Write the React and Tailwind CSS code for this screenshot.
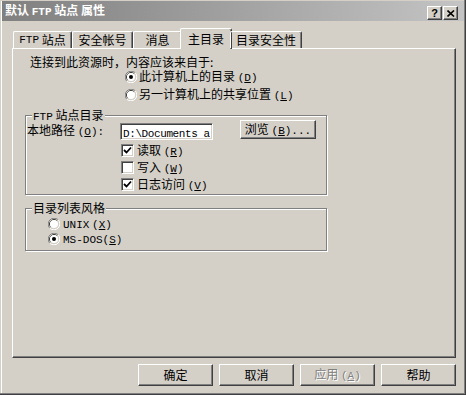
import React from 'react';

function L({ children }) {
  return <span className="font-['Liberation_Mono',monospace] text-[11px]">{children}</span>;
}

function Key({ k }) {
  return (
    <L>
      (<u>{k}</u>)
    </L>
  );
}

function Radio({ checked }) {
  return (
    <svg width="12" height="12" viewBox="0 0 12 12" className="shrink-0">
      <path d="M1.76 10.24 A6 6 0 0 1 10.24 1.76" stroke="#808080" strokeWidth="1" fill="none" />
      <path d="M10.24 1.76 A6 6 0 0 1 1.76 10.24" stroke="#ffffff" strokeWidth="1" fill="none" />
      <path d="M2.82 9.18 A4.5 4.5 0 0 1 9.18 2.82" stroke="#404040" strokeWidth="1" fill="none" />
      <path d="M9.18 2.82 A4.5 4.5 0 0 1 2.82 9.18" stroke="#d4d0c8" strokeWidth="1" fill="none" />
      <circle cx="6" cy="6" r="4" fill="#ffffff" />
      {checked && <circle cx="6" cy="6" r="2" fill="#000000" />}
    </svg>
  );
}

function Check({ checked }) {
  return (
    <div className="w-[13px] h-[13px] shrink-0 bg-white border border-t-[#808080] border-l-[#808080] border-r-white border-b-white shadow-[inset_1px_1px_0_#404040,inset_-1px_-1px_0_#d4d0c8] flex items-center justify-center">
      {checked && (
        <svg width="9" height="9" viewBox="0 0 9 9">
          <path d="M1 4 L3.5 6.5 L8 1.5" stroke="#000" strokeWidth="1.8" fill="none" />
        </svg>
      )}
    </div>
  );
}

function Tab({ children, width, active }) {
  if (active) {
    return (
      <div
        className={`${width} h-[21px] -mx-[2px] -mb-[1px] bg-[#d4d0c8] flex items-center justify-center rounded-t-[2px] border-t border-l border-white border-r border-r-[#404040] shadow-[inset_-1px_0_0_#808080]`}
      >
        {children}
      </div>
    );
  }
  return (
    <div
      className={`${width} h-[17px] flex items-center justify-center rounded-t-[2px] border-t border-l border-white border-r border-r-[#404040] shadow-[inset_-1px_0_0_#808080]`}
    >
      {children}
    </div>
  );
}

function Button({ children, disabled, className = '' }) {
  return (
    <div
      className={`flex items-center justify-center whitespace-nowrap border border-t-white border-l-white border-r-[#404040] border-b-[#404040] shadow-[inset_-1px_-1px_0_#808080] ${
        disabled ? 'text-[#808080] [text-shadow:1px_1px_0_#ffffff]' : ''
      } ${className}`}
    >
      {children}
    </div>
  );
}

export default function App() {
  return (
    <div className="w-[466px] h-[395px] bg-[#d4d0c8] flex flex-col text-[12px] leading-[14px] text-black font-['Noto_Sans_CJK_SC',sans-serif] shadow-[inset_-1px_-1px_0_#404040,inset_-2px_-2px_0_#808080,inset_1px_1px_0_#d4d0c8,inset_2px_2px_0_#ffffff]">
      {/* title bar */}
      <div className="mx-[2px] mt-[1px] h-[20px] flex items-center bg-linear-to-r from-[#808080] to-[#c4c4c4] pl-[3px] pr-[6px]">
        <span className="flex-1 font-bold text-white">
          默认 <L>FTP</L> 站点 属性
        </span>
        <div className="flex gap-[1px] self-end mb-[1px]">
          <Button className="w-[15px] h-[14px] bg-[#d4d0c8]">
            <span className="font-bold font-['Liberation_Sans',sans-serif] text-[11px] leading-[11px]">?</span>
          </Button>
          <Button className="w-[15px] h-[14px] bg-[#d4d0c8]">
            <svg width="8" height="7" viewBox="0 0 8 7">
              <path d="M0.5 0.5 L7 6.5 M7 0.5 L0.5 6.5" stroke="#000" strokeWidth="1.6" />
            </svg>
          </Button>
        </div>
      </div>

      {/* tabs */}
      <div className="relative z-10 mt-[7px] ml-[13px] h-[20px] flex items-end">
        <Tab width="w-[59px]">
          <L>FTP</L>&nbsp;站点
        </Tab>
        <Tab width="w-[61px]">安全帐号</Tab>
        <Tab width="w-[49px]">消息</Tab>
        <Tab width="w-[52px]" active>
          主目录
        </Tab>
        <Tab width="w-[72px]">目录安全性</Tab>
      </div>

      {/* panel */}
      <div className="ml-[12px] w-[444px] h-[310px] flex flex-col border border-t-white border-l-white border-r-[#404040] border-b-[#404040] shadow-[inset_-1px_-1px_0_#808080]">
        <div className="mt-[6px] ml-[17px] h-[14px]">连接到此资源时，内容应该来自于:</div>
        <div className="mt-[1px] ml-[112px] h-[14px] flex items-center gap-[2px]">
          <Radio checked />
          <span>
            此计算机上的目录 <Key k="D" />
          </span>
        </div>
        <div className="mt-[4px] ml-[112px] h-[14px] flex items-center gap-[2px]">
          <Radio />
          <span>
            另一计算机上的共享位置 <Key k="L" />
          </span>
        </div>

        {/* FTP site directory group */}
        <div className="relative mt-[13px] ml-[12px] w-[302px] h-[80px] pt-[5px] pl-[1px] border border-[#808080] shadow-[1px_1px_0_#ffffff,inset_1px_1px_0_#ffffff]">
          <span className="absolute left-[6px] -top-[7px] px-[1px] leading-[12px] bg-[#d4d0c8]">
            <L>FTP</L> 站点目录
          </span>
          <div className="h-[18px] flex items-start">
            <span className="w-[93px] mt-[2px]">
              本地路径 <Key k="O" />
              <L>:</L>
            </span>
            <div className="w-[93px] h-[17px] mt-[2px] bg-white overflow-hidden whitespace-nowrap border border-t-[#808080] border-l-[#808080] border-r-white border-b-white shadow-[inset_1px_1px_0_#404040,inset_-1px_-1px_0_#d4d0c8] pl-[2px] leading-[15px] tracking-[-0.4px]">
              <L>D:\Documents a</L>
            </div>
            <Button className="ml-[27px] w-[76px] h-[19px] -mt-[1px]">
              <span>
                浏览 <Key k="B" />
                <L>...</L>
              </span>
            </Button>
          </div>
          <div className="mt-[3px] pl-[94px] flex flex-col">
            <div className="h-[17px] flex items-center gap-[3px]">
              <Check checked />
              <span>
                读取 <Key k="R" />
              </span>
            </div>
            <div className="h-[17px] flex items-center gap-[3px]">
              <Check />
              <span>
                写入 <Key k="W" />
              </span>
            </div>
            <div className="h-[17px] flex items-center gap-[3px]">
              <Check checked />
              <span>
                日志访问 <Key k="V" />
              </span>
            </div>
          </div>
        </div>

        {/* listing style group */}
        <div className="relative mt-[13px] ml-[12px] w-[302px] h-[43px] pt-[7px] pl-[22px] border border-[#808080] shadow-[1px_1px_0_#ffffff,inset_1px_1px_0_#ffffff]">
          <span className="absolute left-[6px] -top-[7px] px-[1px] leading-[12px] bg-[#d4d0c8]">目录列表风格</span>
          <div className="h-[15px] flex items-center gap-[3px]">
            <Radio />
            <span>
              <L>UNIX</L> <Key k="X" />
            </span>
          </div>
          <div className="h-[15px] flex items-center gap-[3px]">
            <Radio checked />
            <span>
              <L>MS-DOS</L>
              <Key k="S" />
            </span>
          </div>
        </div>
      </div>

      {/* dialog buttons */}
      <div className="mt-[6px] pr-[10px] flex justify-end gap-[6px]">
        <Button className="w-[75px] h-[22px]">确定</Button>
        <Button className="w-[75px] h-[22px]">取消</Button>
        <Button className="w-[75px] h-[22px]" disabled>
          <span>
            应用 <Key k="A" />
          </span>
        </Button>
        <Button className="w-[75px] h-[22px]">帮助</Button>
      </div>
    </div>
  );
}
